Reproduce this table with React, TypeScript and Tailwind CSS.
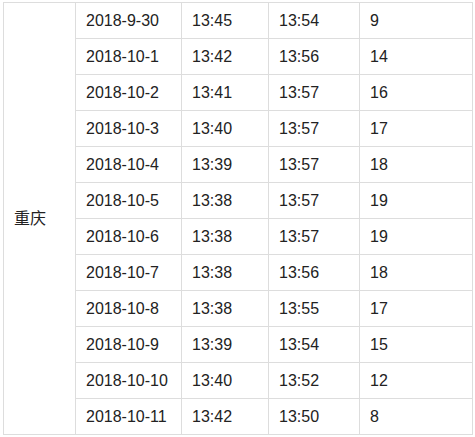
import React from "react";

const rows: [string, string, string, string][] = [
  ["2018-9-30", "13:45", "13:54", "9"],
  ["2018-10-1", "13:42", "13:56", "14"],
  ["2018-10-2", "13:41", "13:57", "16"],
  ["2018-10-3", "13:40", "13:57", "17"],
  ["2018-10-4", "13:39", "13:57", "18"],
  ["2018-10-5", "13:38", "13:57", "19"],
  ["2018-10-6", "13:38", "13:57", "19"],
  ["2018-10-7", "13:38", "13:56", "18"],
  ["2018-10-8", "13:38", "13:55", "17"],
  ["2018-10-9", "13:39", "13:54", "15"],
  ["2018-10-10", "13:40", "13:52", "12"],
  ["2018-10-11", "13:42", "13:50", "8"],
];

export default function App() {
  return (
    <div
      className="w-[475px] h-[437px] bg-white overflow-hidden pt-[2px] pl-[3px] text-[16px] text-[#222]"
      style={{ fontFamily: '"Liberation Sans", Arial, "Noto Sans CJK SC", sans-serif' }}
    >
      <table className="table-fixed border-collapse w-[470px]">
        <colgroup>
          <col className="w-[72px]" />
          <col className="w-[106px]" />
          <col className="w-[87px]" />
          <col className="w-[91px]" />
          <col className="w-[113px]" />
        </colgroup>
        <tbody>
          {rows.map((r, i) => (
            <tr key={i} className="h-[36px]">
              {i === 0 && (
                <td
                  rowSpan={12}
                  className="border border-[#ddd] px-[10px] align-middle"
                >
                  重庆
                </td>
              )}
              {r.map((c, j) => (
                <td
                  key={j}
                  className="border border-[#ddd] px-[10px] py-0 align-middle whitespace-nowrap"
                >
                  {c}
                </td>
              ))}
            </tr>
          ))}
        </tbody>
      </table>
    </div>
  );
}
